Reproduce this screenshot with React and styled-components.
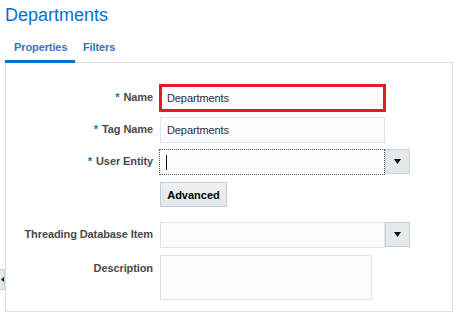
import React from "react";
import styled, { createGlobalStyle } from "styled-components";

const Global = createGlobalStyle`
  html, body { margin: 0; padding: 0; background: #fff; }
  body { font-family: "Liberation Sans", Arial, sans-serif; }
`;

const Page = styled.div`
  position: relative;
  width: 463px;
  height: 316px;
  padding-left: 5px;
  box-sizing: border-box;
  overflow: hidden;
`;

const Title = styled.h1`
  margin: 0;
  padding-top: 4px;
  height: 30px;
  box-sizing: border-box;
  font-size: 18px;
  line-height: 22px;
  font-weight: normal;
  color: #0572ce;
`;

const TabBar = styled.div`
  display: flex;
  align-items: flex-end;
  height: 32px;
  width: 448px;
`;

const Tab = styled.div`
  width: ${(p) => p.$w}px;
  box-sizing: border-box;
  padding: 0 0 6px ${(p) => p.$pl}px;
  font-size: 11px;
  line-height: 13px;
  font-weight: bold;
  letter-spacing: -0.1px;
  color: #3a72c0;
  border-bottom: 3px solid ${(p) => (p.$active ? "#0572ce" : "transparent")};
  margin-bottom: -1px;
  position: relative;
  z-index: 1;
  white-space: nowrap;
`;

const Panel = styled.div`
  width: 448px;
  height: 250px;
  box-sizing: border-box;
  border: 1px solid #d6dfe6;
  padding: 22px 0 0 0;
`;

const Form = styled.div`
  display: grid;
  grid-template-columns: 147px auto;
  column-gap: 7px;
  align-items: start;
`;

const Label = styled.div`
  grid-column: 1;
  text-align: right;
  font-size: 11px;
  font-weight: bold;
  letter-spacing: -0.1px;
  color: #4a4a4a;
  line-height: 13px;
  padding-top: ${(p) => p.$pt || 6}px;
  margin-top: ${(p) => p.$mt || 0}px;
`;

const Star = styled.span`
  color: #0572ce;
  margin-right: 4px;
`;

const Control = styled.div`
  grid-column: 2;
  display: flex;
  margin-top: ${(p) => p.$mt || 0}px;
`;

const Input = styled.div`
  width: ${(p) => p.$w}px;
  height: ${(p) => p.$h || 26}px;
  box-sizing: border-box;
  background: #fbfcfd;
  border: ${(p) => (p.$highlight ? "2px solid #e51b24" : "1px solid #dfe4e8")};
  box-shadow: ${(p) => (p.$highlight ? "0 0 0 1px #e51b24" : "none")};
  padding-left: ${(p) => (p.$highlight ? 5 : 6)}px;
  font-size: 11px;
  letter-spacing: -0.1px;
  line-height: ${(p) => (p.$highlight ? 22 : 24)}px;
  color: #2f2a3a;
`;

const SelectBox = styled.div`
  width: ${(p) => p.$w}px;
  height: 26px;
  box-sizing: border-box;
  background: #fbfcfd;
  border: 1px ${(p) => (p.$focus ? "dotted #555" : "solid #dfe4e8")};
  margin-left: ${(p) => (p.$focus ? -1 : 0)}px;
  display: flex;
  align-items: center;
  padding-left: 6px;
`;

const Caret = styled.span`
  width: 1px;
  height: 15px;
  background: #111;
`;

const DropButton = styled.div`
  width: 25px;
  height: 25px;
  box-sizing: border-box;
  background: #e5e9ec;
  border: 1px solid #c8d1d8;
  display: flex;
  align-items: center;
  justify-content: center;
`;

const Button = styled.div`
  width: 67px;
  height: 25px;
  box-sizing: border-box;
  background: linear-gradient(#eef1f3, #e3e7ea);
  border: 1px solid #c4ced7;
  font-size: 11px;
  font-weight: bold;
  color: #000;
  display: flex;
  align-items: center;
  justify-content: center;
`;

const SideTab = styled.div`
  position: absolute;
  left: 0;
  top: 269px;
  width: 5px;
  height: 21px;
  box-sizing: border-box;
  background: #e4e8eb;
  border: 1px solid #c8d1d8;
  border-left: none;
  display: flex;
  align-items: center;
  justify-content: center;
`;

const Tri = () => (
  <svg width="7" height="5" viewBox="0 0 7 5">
    <path d="M0 0 H7 L3.5 5 Z" fill="#111" />
  </svg>
);

export default function App() {
  return (
    <>
      <Global />
      <Page>
        <Title>Departments</Title>
        <TabBar>
          <Tab $active $w={70} $pl={9}>Properties</Tab>
          <Tab $w={50} $pl={8}>Filters</Tab>
        </TabBar>
        <Panel>
          <Form>
            <Label><Star>*</Star>Name</Label>
            <Control>
              <Input $w={225} $highlight>Departments</Input>
            </Control>

            <Label $mt={6}><Star>*</Star>Tag Name</Label>
            <Control $mt={6}>
              <Input $w={225}>Departments</Input>
            </Control>

            <Label $mt={6}><Star>*</Star>User Entity</Label>
            <Control $mt={6}>
              <SelectBox $focus $w={226}><Caret /></SelectBox>
              <DropButton><Tri /></DropButton>
            </Control>

            <Control $mt={7}>
              <Button>Advanced</Button>
            </Control>

            <Label $mt={15}>Threading Database Item</Label>
            <Control $mt={15}>
              <SelectBox $w={225} />
              <DropButton><Tri /></DropButton>
            </Control>

            <Label $mt={7} $pt={7}>Description</Label>
            <Control $mt={7}>
              <Input $w={212} $h={45} />
            </Control>
          </Form>
        </Panel>
        <SideTab>
          <svg width="3" height="5" viewBox="0 0 3 5">
            <path d="M3 0 V5 L0 2.5 Z" fill="#111" />
          </svg>
        </SideTab>
      </Page>
    </>
  );
}
